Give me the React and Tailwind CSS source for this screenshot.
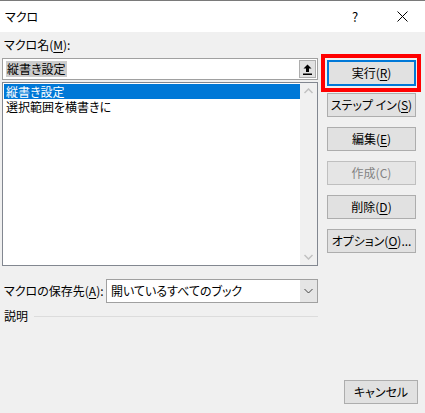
import React from "react";

const Btn = ({ children, disabled, w = "w-[89px]" }) => (
  <div
    className={`${w} h-[24px] shrink-0 whitespace-nowrap flex items-center justify-center border ${disabled ? "text-[#838383] border-[#bfbfbf] bg-[#e5e5e5]" : "text-black border-[#adadad] bg-[#e1e1e1]"}`}
  >
    {children}
  </div>
);

const U = ({ children }) => <span className="underline underline-offset-2">{children}</span>;

export default function App() {
  return (
    <div className="w-[425px] h-[413px] bg-[#f0f0f0] flex flex-col text-[12px] leading-none text-black font-['Noto_Sans_CJK_JP',sans-serif] [font-feature-settings:'palt'] overflow-hidden">
      {/* title bar */}
      <div className="h-[32px] bg-white border-t border-[#7a7a7a] flex items-center pl-[5px] shrink-0">
        <span className="flex-1">マクロ</span>
        <span className="w-[46px] text-center text-[13px] mr-[1px]">?</span>
        <div className="w-[46px] flex items-center justify-center">
          <svg width="11" height="11" viewBox="0 0 11 11">
            <path d="M0.5 0.5L10.5 10.5M10.5 0.5L0.5 10.5" stroke="#000" strokeWidth="1" />
          </svg>
        </div>
      </div>
      <div className="flex flex-1">
        {/* left */}
        <div className="w-[318px] shrink-0 pl-[2px] flex flex-col">
          <div className="h-[26px] flex items-center pl-[2px] whitespace-nowrap">
            マクロ名(<U>M</U>):
          </div>
          <div className="h-[22px] border border-[#a0a0a0] bg-white flex items-center pl-[3px] pr-[1px]">
            <span className="bg-[#cccccc] px-[1px] py-[2px] whitespace-nowrap">縦書き設定</span>
            <div className="flex-1" />
            <div className="w-[17px] h-[18px] bg-[#e1e1e1] border border-[#adadad] flex items-center justify-center">
              <svg width="9" height="11" viewBox="0 0 9 11">
                <path d="M4.5 0.5L0.5 4.5H3V8H6V4.5H8.5Z" fill="#000" />
                <rect x="0" y="9.5" width="9" height="1.5" fill="#000" />
              </svg>
            </div>
          </div>
          <div className="mt-[2px] h-[184px] border border-[#828790] bg-white flex">
            <div className="flex-1 pt-[1px] pl-[1px]">
              <div className="h-[15px] bg-[#0078d7] text-white flex items-center pl-[2px] whitespace-nowrap">縦書き設定</div>
              <div className="h-[15px] flex items-center pl-[2px] whitespace-nowrap">選択範囲を横書きに</div>
            </div>
            <div className="w-[17px] bg-[#f0f0f0] flex flex-col justify-between items-center py-[5px]">
              <svg width="9" height="6" viewBox="0 0 9 6">
                <path d="M0.5 5L4.5 1L8.5 5" stroke="#c1c1c1" strokeWidth="1.5" fill="none" />
              </svg>
              <svg width="9" height="6" viewBox="0 0 9 6">
                <path d="M0.5 1L4.5 5L8.5 1" stroke="#c1c1c1" strokeWidth="1.5" fill="none" />
              </svg>
            </div>
          </div>
          <div className="mt-[13px] flex items-center h-[24px]">
            <span className="w-[104px] pl-[2px] whitespace-nowrap">
              マクロの保存先(<U>A</U>):
            </span>
            <div className="flex-1 h-[24px] border border-[#a0a0a0] bg-white flex">
              <div className="flex-1 flex items-center pl-[4px] whitespace-nowrap">開いているすべてのブック</div>
              <div className="w-[17px] bg-[#e5e5e5] flex items-center justify-center">
                <svg width="9" height="6" viewBox="0 0 9 6">
                  <path d="M0.5 1L4.5 5L8.5 1" stroke="#444" strokeWidth="1" fill="none" />
                </svg>
              </div>
            </div>
          </div>
          <div className="h-[26px] flex items-center pl-[2px]">
            <span>説明</span>
            <div className="flex-1 ml-[6px] h-px bg-[#dcdcdc]" />
          </div>
        </div>
        {/* right */}
        <div className="flex-1 min-w-0 flex flex-col pl-[3px]">
          <div className="mt-[22px] w-[100px] h-[38px] border-[4px] border-[#ff0000] flex items-center pl-[2px] shrink-0">
            <div className="w-[89px] h-[26px] shrink-0 bg-[#e1e1e1] border-2 border-[#0078d7] flex items-center justify-center whitespace-nowrap">
              実行(<U>R</U>)
            </div>
          </div>
          <div className="pl-[6px] flex flex-col gap-[10px] mt-[1px]">
            <Btn>ステップ イン(<U>S</U>)</Btn>
            <Btn>編集(<U>E</U>)</Btn>
            <Btn disabled>作成(C)</Btn>
            <Btn>削除(<U>D</U>)</Btn>
            <Btn>オプション(<U>O</U>)...</Btn>
          </div>
          <div className="mt-auto mb-[9px] pl-[23px]">
            <Btn w="w-[74px]">キャンセル</Btn>
          </div>
        </div>
      </div>
    </div>
  );
}
